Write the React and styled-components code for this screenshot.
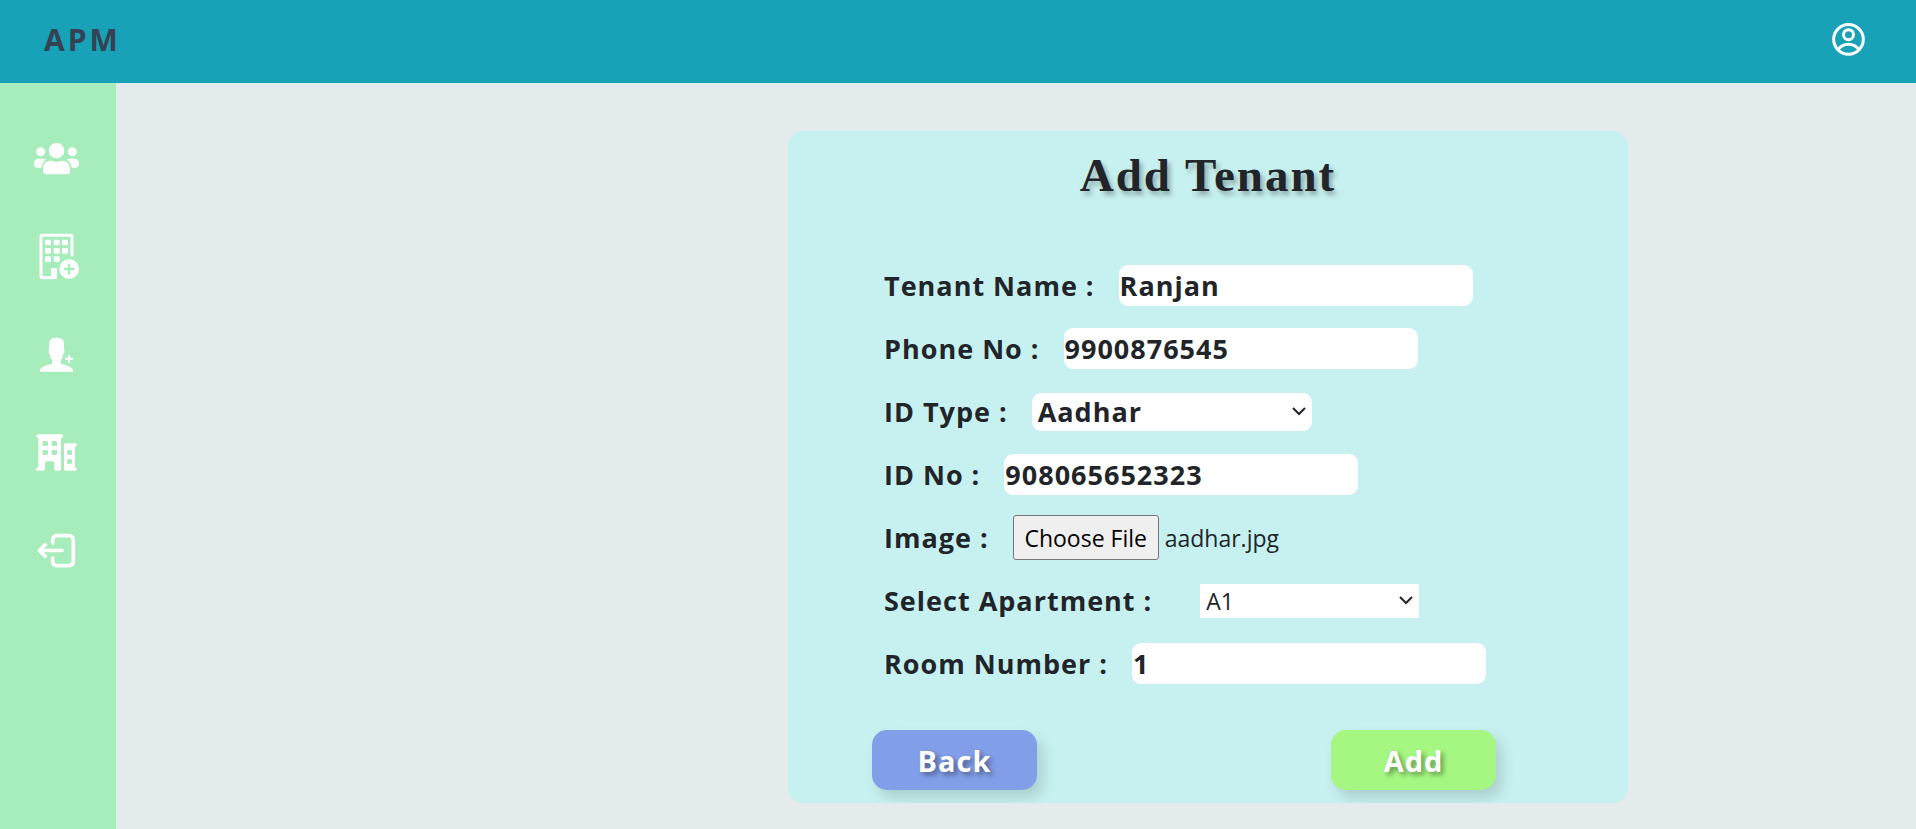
import React, { useRef, useState } from "react";
import styled, { createGlobalStyle } from "styled-components";

const GlobalStyle = createGlobalStyle`
  * { box-sizing: border-box; }
  body {
    margin: 0;
    background: #e3ebed;
    color: #212529;
    font-family: "Segoe UI", "Open Sans", "Noto Sans", sans-serif;
  }
`;

const Page = styled.div`
  display: flex;
  flex-direction: column;
  min-height: 100vh;
`;

const Header = styled.header`
  display: flex;
  align-items: center;
  justify-content: space-between;
  height: 83px;
  padding: 0 50px 5px 44px;
  background: #17a2b8;
`;

const Brand = styled.a`
  color: #364153;
  font-size: 30px;
  font-weight: 700;
  letter-spacing: 3px;
  text-decoration: none;
`;

const IconButton = styled.button`
  display: flex;
  padding: 0;
  border: 0;
  background: none;
  color: #fff;
  cursor: pointer;
`;

const Body = styled.div`
  display: flex;
  flex: 1;
`;

const Sidebar = styled.nav`
  display: flex;
  flex-direction: column;
  gap: 50px;
  width: 116px;
  padding: 51px 32px;
  background: #a7edbb;
`;

const NavLink = styled.a`
  display: flex;
  color: #fff;
`;

const Main = styled.main`
  flex: 1;
  padding: 48px 288px 26px 24px;
`;

const Card = styled.form`
  max-width: 840px;
  margin-left: auto;
  padding: 14px 96px 13px;
  border-radius: 15px;
  background: #c7f1f0;
  overflow: hidden;
`;

const Title = styled.h1`
  margin: 0 0 48px;
  font-family: "Times New Roman", "Liberation Serif", serif;
  font-size: 47px;
  font-weight: 700;
  line-height: 61px;
  letter-spacing: 2px;
  text-align: center;
  text-shadow: 3px 4px 5px rgba(0, 0, 0, 0.3);
`;

const Row = styled.div`
  display: flex;
  align-items: center;
  gap: ${(p) => (p.$wide ? 48 : 24)}px;
  height: 63px;
`;

const Label = styled.label`
  font-size: 27px;
  font-weight: 700;
  letter-spacing: 1px;
  white-space: nowrap;
`;

const TextInput = styled.input`
  width: 354px;
  height: 41px;
  padding: 0 1px;
  border: 0;
  border-radius: 9px;
  background: #fff;
  color: #212529;
  font: 700 27px "Segoe UI", "Open Sans", "Noto Sans", sans-serif;
  letter-spacing: 1px;
`;

const SelectBox = styled.div`
  display: grid;
  align-items: center;

  > * {
    grid-area: 1 / 1;
  }

  > svg {
    justify-self: end;
    margin: 0 6px 2px 0;
    pointer-events: none;
  }
`;

const SelectControl = styled.select`
  appearance: none;
  width: ${(p) => (p.$plain ? 219 : 280)}px;
  height: ${(p) => (p.$plain ? 34 : 38)}px;
  padding: 0 24px 0 6px;
  border: 0;
  border-radius: ${(p) => (p.$plain ? 0 : 9)}px;
  background: #fff;
  color: #212529;
  font-family: inherit;
  font-size: ${(p) => (p.$plain ? 23 : 27)}px;
  font-weight: ${(p) => (p.$plain ? 400 : 700)};
  line-height: 34px;
  letter-spacing: ${(p) => (p.$plain ? 0 : 1)}px;
`;

const FilePicker = styled.div`
  display: flex;
  align-items: center;
  gap: 6px;
  font-size: 23px;
`;

const FileButton = styled.button`
  width: 146px;
  height: 45px;
  padding: 0;
  border: 1px solid #767676;
  border-radius: 3px;
  background: #efefef;
  color: #000;
  font: inherit;
  white-space: nowrap;
`;

const Actions = styled.div`
  display: flex;
  justify-content: space-between;
  margin: 35px 36px 0 -12px;
`;

const ActionButton = styled.button`
  width: 165px;
  height: 60px;
  padding: 0;
  border: 0;
  border-radius: 15px;
  background: ${(p) => (p.$primary ? "#a5f782" : "#829ee8")};
  box-shadow: 6px 8px 14px rgba(0, 0, 0, 0.14);
  color: #fff;
  font: 700 29px "Segoe UI", "Open Sans", "Noto Sans", sans-serif;
  letter-spacing: 1px;
  text-shadow: 3px 3px 5px rgba(0, 0, 0, 0.4);
  cursor: pointer;
`;

const NavIcon = ({ children }) => (
  <svg width="48" height="48" viewBox="0 0 144 144" fill="currentColor" aria-hidden="true">
    {children}
  </svg>
);

const UsersIcon = () => (
  <NavIcon>
    <circle cx="73.500" cy="50" r="23" />
    <circle cx="26" cy="53" r="13.500" />
    <circle cx="121" cy="53" r="13.500" />
    <path d="M33 111V103C33 90 43 80.500 56 80.500Q61 80.500 64 82Q73.500 85 83 82Q86 80.500 91 80.500C104 80.500 114 90 114 103V111Q114 121 104 121H43Q33 121 33 111Z" />
    <path d="M21 74H33Q38 74 42 77Q31 84 28 101H17Q6 101 6 90V88Q6 74 21 74Z" />
    <path d="M126 74H114Q109 74 105 77Q116 84 119 101H130Q141 101 141 90V88Q141 74 126 74Z" />
  </NavIcon>
);

const BuildingPlusIcon = () => (
  <NavIcon>
    <path
      d="M61 137H30.500Q27 137 27 133V13.500Q27 10 30.500 10H116.500Q120 10 120 13.500V69"
      fill="none"
      stroke="currentColor"
      strokeWidth="9"
      strokeLinecap="round"
    />
    <path d="M57 112Q57 108 61 108H70Q75 108 75 112V141H57Z" />
    {[23, 48, 73].map((y) =>
      [39, 65, 90].map((x) =>
        x === 90 && y === 73 ? null : <rect key={`${x}-${y}`} x={x} y={y} width="18" height="17" rx="4" />
      )
    )}
    <circle cx="111.500" cy="111" r="29.500" />
    <path d="M111 98V125M98 111H125" stroke="#a7edbb" strokeWidth="7" strokeLinecap="round" />
  </NavIcon>
);

const PersonPlusIcon = () => (
  <NavIcon>
    <path d="M51 41C51 29 59 23 73.500 23S96 29 96 41V60Q98.500 61 97 67Q96 71 94 72Q92 85 87 91V102Q101 105 111 109Q123 114 124 125.500H23Q24 114 36 109Q46 105 60 102V91Q55 85 53 72Q50 71 49 65Q49 61 51 60Z" />
    <path d="M111 77V96M102 86.500H121" stroke="currentColor" strokeWidth="6" strokeLinecap="round" />
  </NavIcon>
);

const BuildingsIcon = () => (
  <NavIcon>
    <path
      fillRule="evenodd"
      d="M17 18.500H88Q94 18.500 94 24T87 30V124Q87 128.500 83 128.500H72Q67 128.500 67 124V105Q67 100 62 100H44Q39 100 39 105V124Q39 128.500 34 128.500H17Q12 128.500 12 124T19 118V30Q12 29 12 24T17 18.500ZM36 39Q32 39 32 43V50Q32 54 36 54H44Q48 54 48 50V43Q48 39 44 39ZM63 39Q59 39 59 43V50Q59 54 63 54H71Q75 54 75 50V43Q75 39 71 39ZM36 66Q32 66 32 70V77Q32 81 36 81H44Q48 81 48 77V70Q48 66 44 66ZM63 66Q59 66 59 70V77Q59 81 63 81H71Q75 81 75 77V70Q75 66 71 66Z"
    />
    <path
      fillRule="evenodd"
      d="M101 46H130Q135 46 135 51T129 57V118Q135 119 135 124T130 128.500H101Q96 128.500 96 123V51Q96 46 101 46ZM109 66Q105 66 105 70V77Q105 81 109 81H116Q120 81 120 77V70Q120 66 116 66ZM109 93Q105 93 105 97V104Q105 108 109 108H116Q120 108 120 104V97Q120 93 116 93Z"
    />
  </NavIcon>
);

const LogoutIcon = () => (
  <NavIcon>
    <g fill="none" stroke="currentColor" strokeWidth="11" strokeLinecap="round" strokeLinejoin="round">
      <path d="M62 51V43Q62 29 76 29H110Q124 29 124 43V105Q124 119 110 119H76Q62 119 62 105V96" />
      <path d="M90 73.500H22M40 56L22 73.500L40 91" />
    </g>
  </NavIcon>
);

const AccountIcon = () => (
  <svg width="36" height="36" viewBox="0 0 108 108" fill="none" stroke="currentColor" strokeWidth="9" aria-hidden="true">
    <circle cx="55.500" cy="55" r="44.500" />
    <circle cx="55.500" cy="41" r="15" />
    <path d="M24 86C39 64 72 64 87 86" />
  </svg>
);

const Select = (props) => (
  <SelectBox>
    <SelectControl {...props} />
    <svg width="14" height="10" viewBox="0 0 14 10" fill="none" stroke="#212529" strokeWidth="2" aria-hidden="true">
      <path d="M1 2L7 8L13 2" />
    </svg>
  </SelectBox>
);

const navItems = [
  ["Tenants", UsersIcon],
  ["Add apartment", BuildingPlusIcon],
  ["Add tenant", PersonPlusIcon],
  ["Apartments", BuildingsIcon],
  ["Log out", LogoutIcon],
];

const TextField = ({ id, label, ...rest }) => (
  <Row>
    <Label htmlFor={id}>{label} :</Label>
    <TextInput id={id} name={id} type="text" {...rest} />
  </Row>
);

export default function App() {
  const fileRef = useRef(null);
  const [fileName, setFileName] = useState("aadhar.jpg");

  return (
    <Page>
      <GlobalStyle />
      <Header>
        <Brand href="#home">APM</Brand>
        <IconButton type="button" aria-label="Account">
          <AccountIcon />
        </IconButton>
      </Header>
      <Body>
        <Sidebar>
          {navItems.map(([name, Icon]) => (
            <NavLink key={name} href="#" aria-label={name}>
              <Icon />
            </NavLink>
          ))}
        </Sidebar>
        <Main>
          <Card onSubmit={(e) => e.preventDefault()}>
            <Title>Add Tenant</Title>
            <TextField id="name" label="Tenant Name" defaultValue="Ranjan" />
            <TextField id="phone" label="Phone No" defaultValue="9900876545" />
            <Row>
              <Label htmlFor="idType">ID Type :</Label>
              <Select id="idType" defaultValue="Aadhar">
                <option>Aadhar</option>
              </Select>
            </Row>
            <TextField id="idNo" label="ID No" defaultValue="908065652323" />
            <Row>
              <Label htmlFor="image">Image :</Label>
              <FilePicker>
                <input
                  id="image"
                  ref={fileRef}
                  type="file"
                  hidden
                  onChange={(e) => setFileName(e.target.files[0]?.name ?? "No file chosen")}
                />
                <FileButton type="button" onClick={() => fileRef.current.click()}>
                  Choose File
                </FileButton>
                <span>{fileName}</span>
              </FilePicker>
            </Row>
            <Row $wide>
              <Label htmlFor="apartment">Select Apartment :</Label>
              <Select id="apartment" $plain defaultValue="A1">
                <option>A1</option>
              </Select>
            </Row>
            <TextField id="room" label="Room Number" defaultValue="1" />
            <Actions>
              <ActionButton type="button">Back</ActionButton>
              <ActionButton type="submit" $primary>
                Add
              </ActionButton>
            </Actions>
          </Card>
        </Main>
      </Body>
    </Page>
  );
}
